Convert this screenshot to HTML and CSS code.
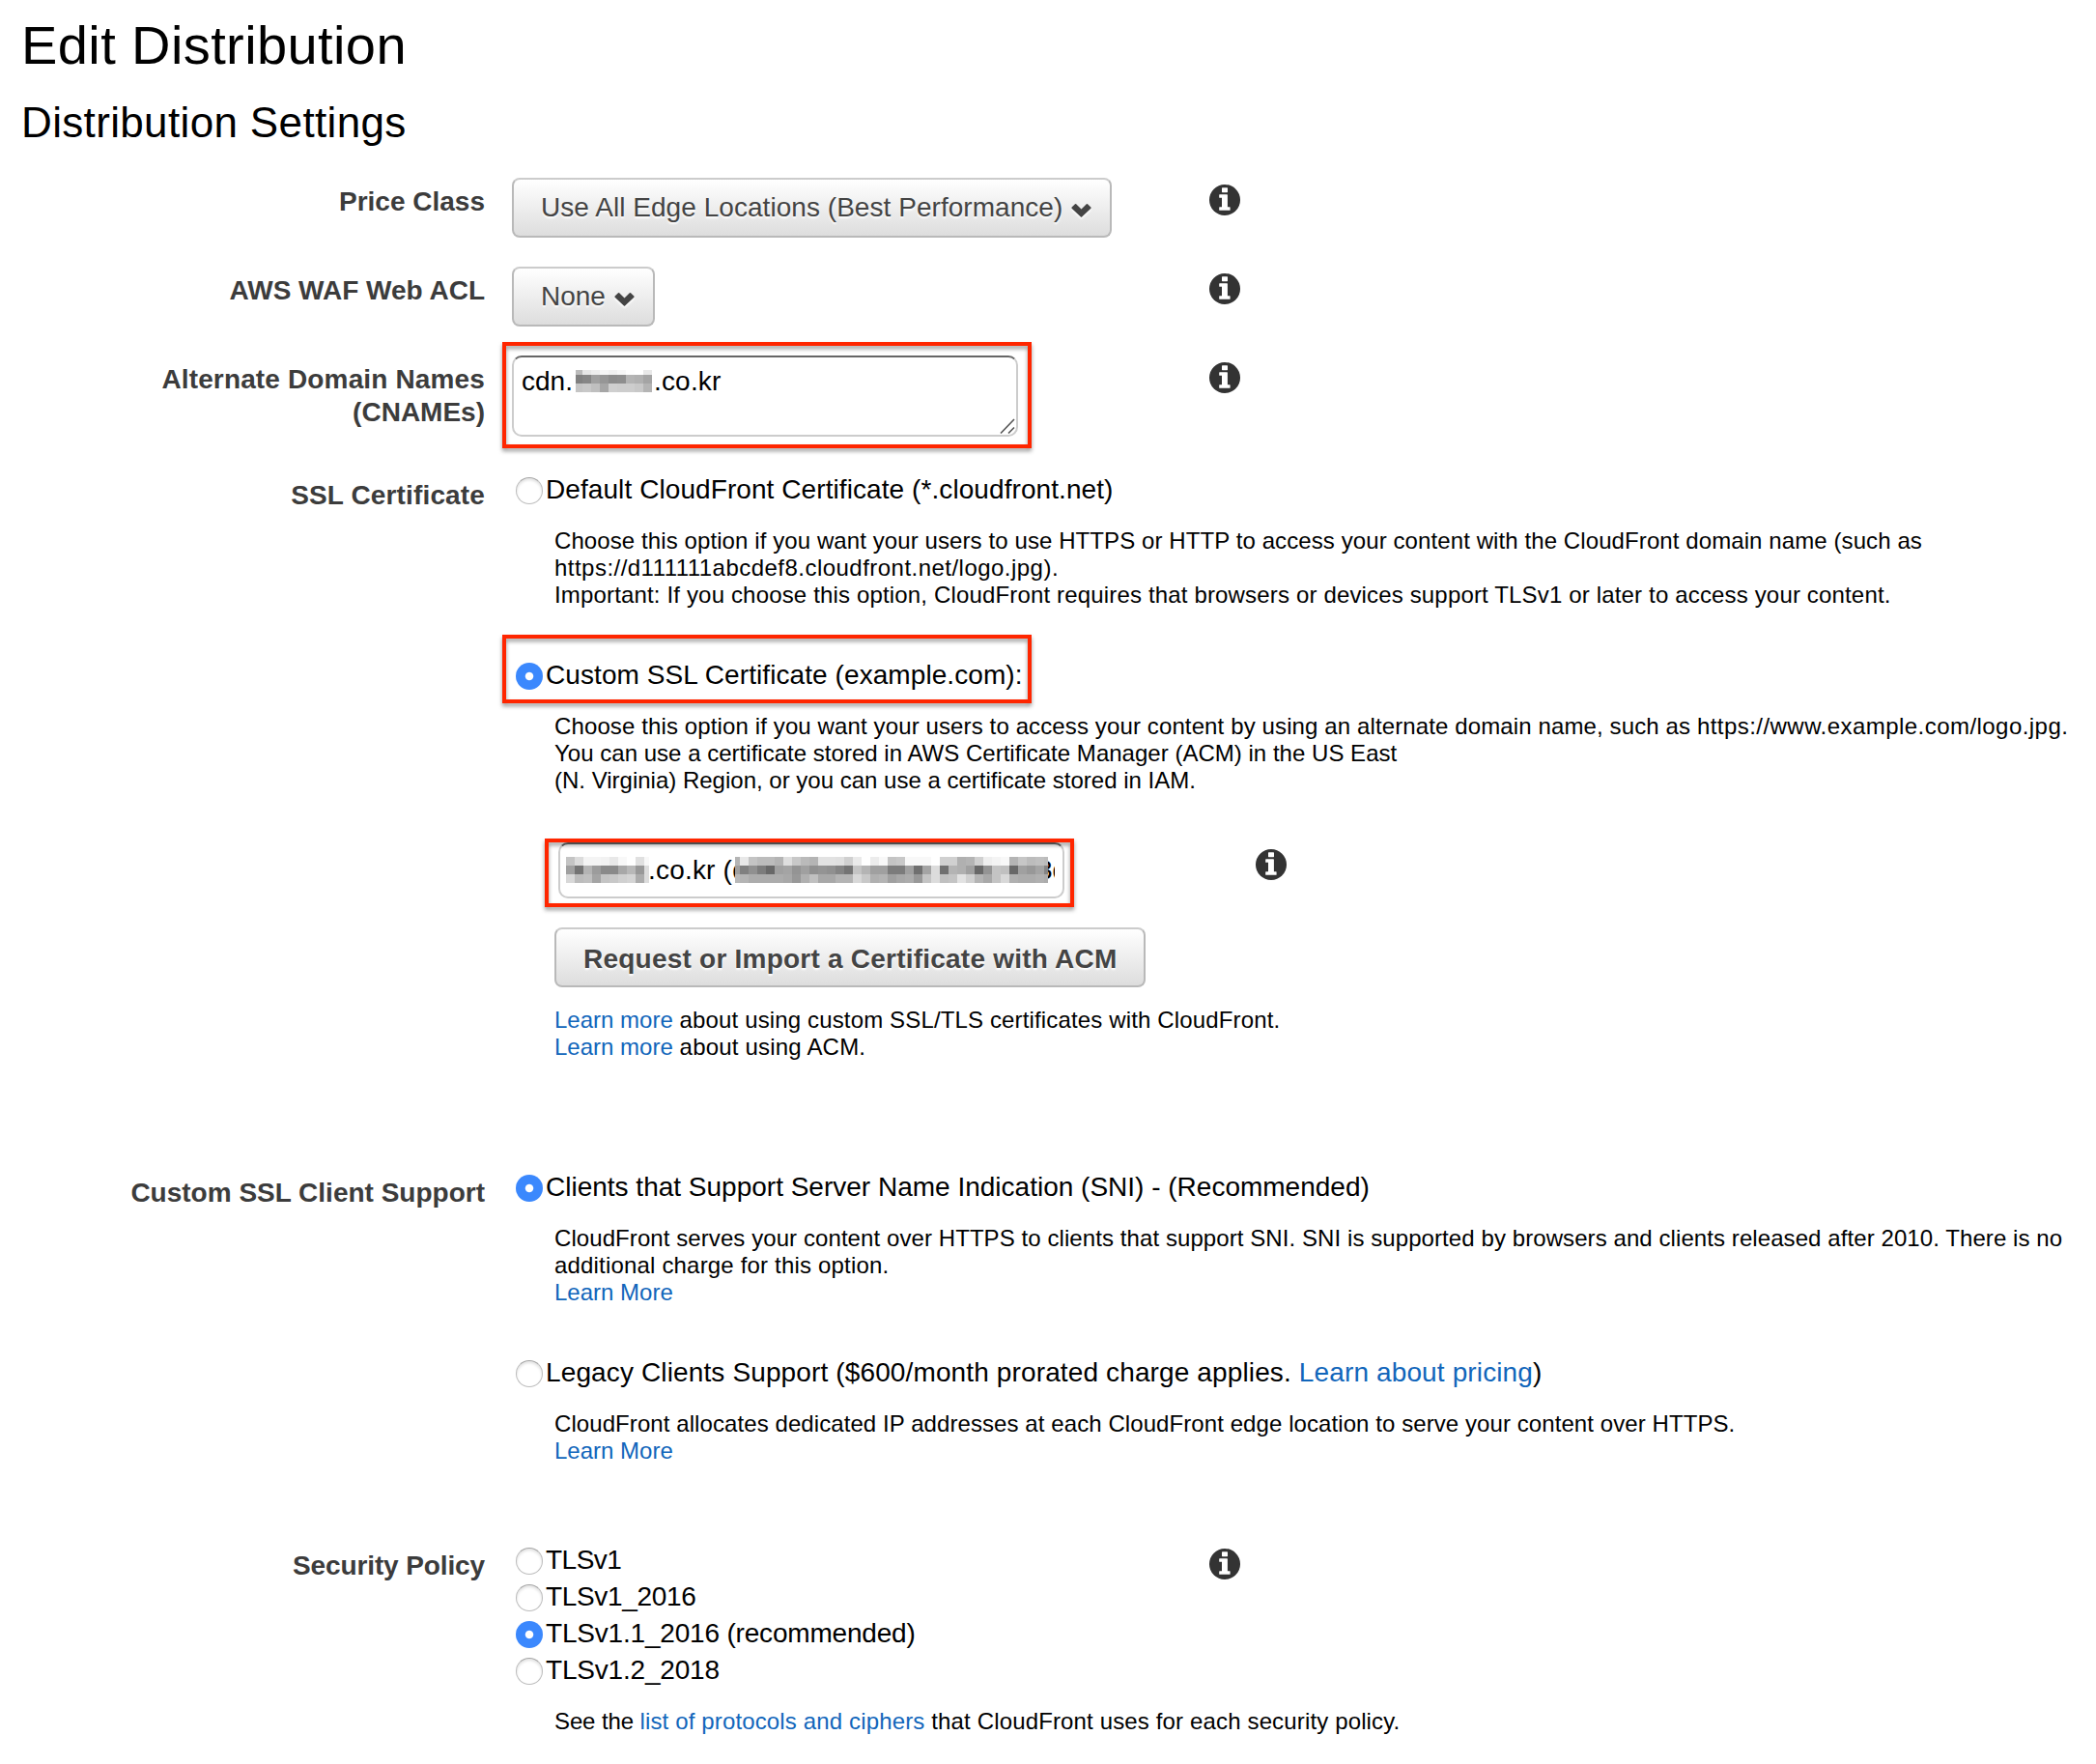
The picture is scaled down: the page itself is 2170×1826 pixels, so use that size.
FILE: index.html
```html
<!DOCTYPE html>
<html lang="en">
<head>
<meta charset="utf-8">
<title>Edit Distribution</title>
<link rel="stylesheet" href="styles.css">
</head>
<body>
<svg class="defs" aria-hidden="true">
  <symbol id="info" viewBox="0 0 32 32">
    <circle cx="16" cy="16" r="16" fill="#333"/>
    <rect x="13" y="3.2" width="6" height="5" rx=".6" fill="#fff"/>
    <path d="M10.8 10.2H18.3Q18.9 10.2 18.9 10.8V23.2H21Q21.6 23.2 21.6 23.8V26.2Q21.6 26.8 21 26.8H10.8Q10.2 26.8 10.2 26.2V23.8Q10.2 23.2 10.8 23.2H13V13.8H10.8Q10.2 13.8 10.2 13.2V10.8Q10.2 10.2 10.8 10.2Z" fill="#fff"/>
  </symbol>
  <symbol id="chevron" viewBox="0 0 21 15">
    <path d="M.6 4.6L4 1.2Q4.6 .7 5.2 1.2L10.5 6.5L15.8 1.2Q16.4 .7 17 1.2L20.4 4.6Q20.9 5.2 20.4 5.8L11.1 14.4Q10.5 14.9 9.9 14.4L.6 5.8Q.1 5.2 .6 4.6Z" fill="#444"/>
  </symbol>
</svg>

<main class="page">
  <h1 class="title">Edit Distribution</h1>
  <h2 class="subtitle">Distribution Settings</h2>

  <form class="form">
    <div class="row row-select">
      <div class="label">Price Class</div>
      <div class="line">
        <div class="control"><button type="button" class="btn select"><span class="ls-05">Use All Edge Locations (Best Performance)</span><svg class="chevron"><use href="#chevron"/></svg></button></div>
        <svg class="info"><use href="#info"/></svg>
      </div>
    </div>

    <div class="row row-select">
      <div class="label">AWS WAF Web ACL</div>
      <div class="line">
        <div class="control"><button type="button" class="btn select">None<svg class="chevron"><use href="#chevron"/></svg></button></div>
        <svg class="info"><use href="#info"/></svg>
      </div>
    </div>

    <div class="row row-names">
      <div class="label"><span class="ls-15">Alternate Domain Names</span><br>(CNAMEs)</div>
      <div class="line">
        <div class="control">
          <div class="textarea marked">
            <span>cdn.</span><svg class="mosaic mosaic-domain" data-first="7" data-rows="bbe6eef5f0f6fdffe8 8086a0968c8eb4b0a4 c4c8bfa6cfcdcdc8b4"></svg><span class="ls-20">.co.kr</span>
            <svg class="grip" viewBox="0 0 16 16"><path d="M1 15.5L15 1M9 15.5L15 9.5" stroke="#555" stroke-width="1.6" fill="none"/></svg>
            <i class="mark mark-names"></i>
          </div>
        </div>
        <svg class="info"><use href="#info"/></svg>
      </div>
    </div>

    <div class="row row-cert">
      <div class="label ls-15">SSL Certificate</div>
      <div class="field">
        <div class="option"><i class="radio"></i><span class="ls-08">Default CloudFront Certificate (*.cloudfront.net)</span></div>
        <p class="desc"><span class="ls-09">Choose this option if you want your users to use HTTPS or HTTP to access your content with the CloudFront domain name (such as</span><br><span class="ls-47">https://d111111abcdef8.cloudfront.net/logo.jpg).</span><br><span class="ls-16">Important: If you choose this option, CloudFront requires that browsers or devices support TLSv1 or later to access your content.</span></p>

        <div class="option next marked"><i class="radio on"></i><span class="ls-08">Custom SSL Certificate (example.com):</span><i class="mark mark-custom"></i></div>
        <p class="desc"><span class="ls-12">Choose this option if you want your users to access your content by using an alternate domain name, such as </span><span class="ls-45">https://www.example.com/logo.jpg.</span><br><span class="ls-02">You can use a certificate stored in AWS Certificate Manager (ACM) in the US East</span><br>(N. Virginia) Region, or you can use a certificate stored in IAM.</p>

        <div class="line cert-line">
          <div class="control">
            <div class="input marked">
              <div class="value">
                <svg class="mosaic mosaic-name" data-first="9" data-rows="c4dcf4f4f2e8f8ffe0f8 a074b49c8a8aa8b898dc d8bcc0a4c4c8d0d4acdc"></svg>
                <span class="ls-20">.co.kr (d</span>
                <svg class="mosaic mosaic-id" data-first="5" data-rows="b4e8c4bcbcb4dec8bab4e2e2e0d0eaffecf8c4c8f8f8f8ffd0d0b0b4d0eff4f8b4c6bcc0bc a080907c68a0a494a09094908474c4b4a0a07c7ca070a4dc70b4b0a06894c4c068a098a484 b8b4acacacaca898b0c0a8a8b4b4d8c8b0b4a0a8ac98c4dcc0c4e2d0b4a8c4d8b0acacb0ac"></svg>
                <span class="tail">3d</span>
              </div>
              <i class="mark mark-input"></i>
            </div>
          </div>
          <svg class="info"><use href="#info"/></svg>
        </div>

        <button type="button" class="btn acm"><span class="ls-23">Request or Import a Certificate with ACM</span></button>
        <p class="desc links"><a>Learn more</a><span class="ls-15"> about using custom SSL/TLS certificates with CloudFront.</span><br><a>Learn more</a><span class="ls-20"> about using ACM.</span></p>
      </div>
    </div>

    <div class="row row-client">
      <div class="label">Custom SSL Client Support</div>
      <div class="field">
        <div class="option"><i class="radio on"></i><span>Clients that Support Server Name Indication (SNI) - (Recommended)</span></div>
        <p class="desc"><span class="ls-08">CloudFront serves your content over HTTPS to clients that support SNI. SNI is supported by browsers and clients released after 2010. There is no</span><br><span class="ls-18">additional charge for this option.</span><br><a>Learn More</a></p>
        <div class="option next"><i class="radio"></i><span class="ls-13">Legacy Clients Support ($600/month prorated charge applies. <a>Learn about pricing</a>)</span></div>
        <p class="desc"><span class="ls-08">CloudFront allocates dedicated IP addresses at each CloudFront edge location to serve your content over HTTPS.</span><br><a>Learn More</a></p>
      </div>
    </div>

    <div class="row row-policy">
      <div class="label tight">Security Policy</div>
      <div class="field">
        <div class="line policy-line">
          <div class="control options">
            <div class="option"><i class="radio"></i><span class="tight-5">TLSv1</span></div>
            <div class="option"><i class="radio"></i><span class="tight-3">TLSv1_2016</span></div>
            <div class="option"><i class="radio on"></i><span class="tight-2">TLSv1.1_2016 (recommended)</span></div>
            <div class="option"><i class="radio"></i><span class="tight-2">TLSv1.2_2018</span></div>
          </div>
          <svg class="info"><use href="#info"/></svg>
        </div>
        <p class="desc ls-15"><span class="tight">See the </span><a>list of protocols and ciphers</a> that CloudFront uses for each security policy.</p>
      </div>
    </div>
  </form>
</main>
<script src="script.js"></script>
</body>
</html>
```
FILE: styles.css
```css
* { box-sizing: border-box; }
body {
  margin: 0;
  background: #fff;
  color: #000;
  font: 28px/34px "Liberation Sans", Arial, sans-serif;
  white-space: nowrap;
}
.defs { display: none; }
.page { padding: 15px 0 0 22px; height: 1826px; overflow: hidden; }
.title { margin: 0; font-size: 56px; line-height: 64px; font-weight: 400; letter-spacing: .4px; }
.subtitle { margin: 23px 0 32px; font-size: 44px; line-height: 50px; font-weight: 400; letter-spacing: .35px; }

/* Rows: right-aligned label column and field column */
.row { display: grid; grid-template-columns: 480px 1fr; column-gap: 28px; align-items: start; }
.row-select { height: 92px; }
.row-names { height: 120px; }
.row-cert { height: 722px; }
.row-client { height: 386px; }
.label { padding-top: 8px; text-align: right; font-weight: 700; color: #3c3c3c; }
.field { padding-top: 6px; }
.line { display: flex; align-items: flex-start; }
.control { width: 722px; flex: none; }
.info { display: block; width: 32px; height: 32px; margin-top: 7px; flex: none; }

/* Buttons */
.btn {
  display: flex;
  align-items: center;
  height: 62px;
  padding: 0 19px 0 28px;
  border: 2px solid #b9b9b9;
  border-top-color: #ccc;
  border-radius: 8px;
  background: linear-gradient(#fff, #ddd);
  color: #444;
  font: inherit;
  text-shadow: 0 2px 2px #fff;
}
.chevron { width: 21px; height: 15px; margin: 5px 0 0 9px; filter: drop-shadow(0 2px 1px #fff); }
.acm { margin: 30px 0 0 44px; padding: 4px 28px 0; font-weight: 700; }

/* Text fields */
.textarea, .input {
  display: flex;
  border: 2px solid #ccc;
  border-top-color: #666;
  border-radius: 10px;
  background: #fff;
}
.textarea { width: 524px; height: 84px; padding: 8px 0 0 8px; }
.input { width: 524px; height: 58px; margin-left: 48px; padding: 10px 8px 0 5px; }
.value { display: flex; width: 507px; overflow: hidden; }
.mosaic { display: block; flex: none; }
.mosaic-domain { width: 79px; height: 23px; margin: 5px 2px 0 3px; }
.mosaic-name { width: 86px; height: 27px; margin: 3px -1px 0 1px; }
.mosaic-id { position: relative; width: 324px; height: 27px; margin: 3px 0 0 -13px; }
.tail { margin-left: -11px; }
.grip { position: absolute; right: 1px; bottom: 1px; width: 16px; height: 16px; }

/* Radio options */
.option { display: flex; gap: 3px; height: 28px; margin-left: 4px; line-height: 25px; }
.option.next { margin-top: 56px; }
.options { display: grid; gap: 10px; }
.radio {
  position: relative;
  width: 28px;
  height: 28px;
  flex: none;
  border: 1.5px solid #bdbdbd;
  border-top-color: #a5a5a5;
  border-radius: 50%;
  background: #fff;
  box-shadow: inset 0 2px 3px rgba(0, 0, 0, .12);
}
.radio.on { border: 0; background: radial-gradient(circle, #fff 3.7px, #3b88fd 4.7px); box-shadow: none; }

.desc { margin: 24px 0 0 44px; font-size: 24px; line-height: 28px; }
.cert-line { margin-top: 50px; }
.cert-line .control { width: 770px; }
.links { margin-top: 20px; }
.policy-line .info { margin-top: 1px; }
a { color: #1166bb; }

/* Callout frames drawn over the form */
.marked { position: relative; }
.mark {
  position: absolute;
  border: 4px solid #ff2600;
  filter: drop-shadow(0 3px 2px rgba(0, 0, 0, .4));
}
.mark-names { left: -12px; top: -16px; width: 548px; height: 110px; }
.mark-custom { left: -14px; top: -29px; width: 548px; height: 71px; }
.mark-input { left: -16px; top: -6px; width: 548px; height: 71px; }

/* Tracking */
.ls-02 { letter-spacing: .02px; }
.ls-05 { letter-spacing: .045px; }
.ls-08 { letter-spacing: .08px; }
.ls-09 { letter-spacing: .093px; }
.ls-12 { letter-spacing: .12px; }
.ls-13 { letter-spacing: .13px; }
.ls-15 { letter-spacing: .145px; }
.ls-16 { letter-spacing: .16px; }
.ls-18 { letter-spacing: .18px; }
.ls-20 { letter-spacing: .196px; }
.ls-23 { letter-spacing: .225px; }
.ls-45 { letter-spacing: .45px; }
.ls-47 { letter-spacing: .47px; }
.tight { letter-spacing: -.12px; }
.tight-2 { letter-spacing: -.19px; }
.tight-3 { letter-spacing: -.33px; }
.tight-5 { letter-spacing: -.5px; }
```
FILE: script.js
```js
// Fills each redaction mosaic with grey cells, two hex digits per cell.
const NS = "http://www.w3.org/2000/svg";
document.querySelectorAll(".mosaic").forEach((svg) => {
  const rows = svg.dataset.rows.split(" ");
  const first = Number(svg.dataset.first);
  const height = svg.getBoundingClientRect().height;
  const tops = [0, height - 18, height - 9, height];
  rows.forEach((row, r) => {
    row.match(/../g).forEach((tone, c) => {
      const cell = document.createElementNS(NS, "rect");
      cell.setAttribute("x", c ? first + (c - 1) * 9 : 0);
      cell.setAttribute("y", tops[r]);
      cell.setAttribute("width", c ? 9 : first);
      cell.setAttribute("height", tops[r + 1] - tops[r]);
      cell.setAttribute("fill", "#" + tone.repeat(3));
      cell.setAttribute("shape-rendering", "crispEdges");
      svg.append(cell);
    });
  });
});
```
